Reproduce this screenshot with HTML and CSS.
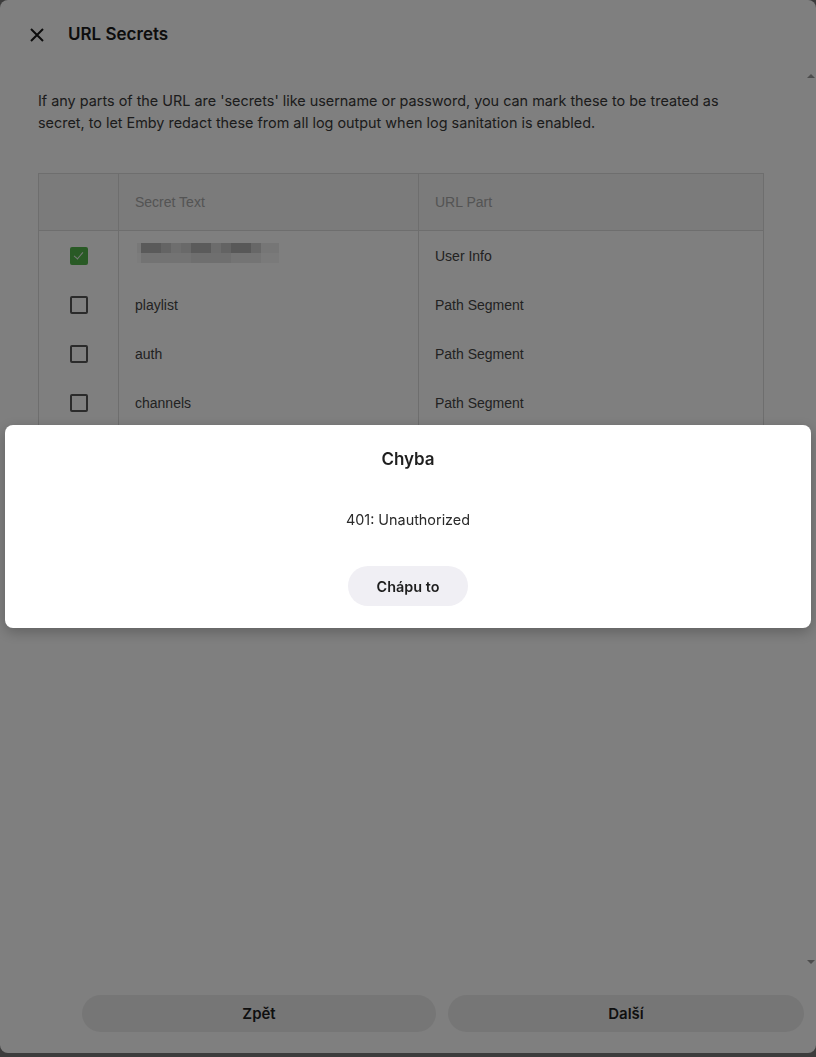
FILE: index.html
```html
<!DOCTYPE html>
<html lang="cs">
<head>
  <meta charset="UTF-8">
  <meta name="viewport" content="width=device-width, initial-scale=1.0">
  <title>URL Secrets</title>
  <link rel="stylesheet" href="styles.css">
</head>
<body>
  <div class="sheet">
    <header class="sheet-header">
      <button class="close-btn" aria-label="Close">
        <svg width="16" height="16" viewBox="0 0 16 16">
          <path d="M2 2 L14 14 M14 2 L2 14" stroke="#1a1a1a" stroke-width="2" fill="none"/>
        </svg>
      </button>
      <h1>URL Secrets</h1>
    </header>

    <main class="sheet-body">
      <p class="intro">If any parts of the URL are 'secrets' like username or password, you can mark these to be treated as secret, to let Emby redact these from all log output when log sanitation is enabled.</p>

      <table class="secrets">
        <thead>
          <tr>
            <th class="col-check"></th>
            <th class="col-text">Secret Text</th>
            <th>URL Part</th>
          </tr>
        </thead>
        <tbody>
          <tr>
            <td class="col-check"><span class="checkbox checked"></span></td>
            <td><span class="redacted"></span></td>
            <td>User Info</td>
          </tr>
          <tr>
            <td class="col-check"><span class="checkbox"></span></td>
            <td>playlist</td>
            <td>Path Segment</td>
          </tr>
          <tr>
            <td class="col-check"><span class="checkbox"></span></td>
            <td>auth</td>
            <td>Path Segment</td>
          </tr>
          <tr>
            <td class="col-check"><span class="checkbox"></span></td>
            <td>channels</td>
            <td>Path Segment</td>
          </tr>
        </tbody>
      </table>
    </main>

    <footer class="sheet-footer">
      <button class="footer-btn">Zpět</button>
      <button class="footer-btn">Další</button>
    </footer>

    <span class="scroll-arrow up"></span>
    <span class="scroll-arrow down"></span>
  </div>

  <div class="overlay">
    <div class="dialog">
      <h2>Chyba</h2>
      <p>401: Unauthorized</p>
      <button class="dialog-btn">Chápu to</button>
    </div>
  </div>
</body>
</html>
```

FILE: styles.css
```css
* {
  box-sizing: border-box;
  margin: 0;
  padding: 0;
}

html {
  background: #787878;
}

body {
  height: 1057px;
  overflow: hidden;
  font-family: Inter, "Noto Sans", sans-serif;
  color: #1f1f1f;
}

button {
  font-family: inherit;
  border: none;
  cursor: pointer;
}

/* sheet */

.sheet {
  position: relative;
  height: 1053px;
  background: #fefefe;
  border-radius: 8px;
  display: flex;
  flex-direction: column;
}

.sheet-header {
  height: 68px;
  display: flex;
  align-items: center;
  padding-left: 29px;
}

.close-btn {
  width: 16px;
  height: 16px;
  background: none;
  display: flex;
  margin-right: 23px;
  margin-top: 2px;
}

.sheet-header h1 {
  font-size: 17px;
  font-weight: 600;
  color: #1a1a1a;
}

.sheet-body {
  flex: 1;
  padding: 22px 52px 0 38px;
}

.intro {
  font-size: 14.4px;
  line-height: 22px;
  color: #383838;
  margin-bottom: 39px;
  padding-right: 4px;
}

/* table */

.secrets {
  width: 726px;
  border-collapse: collapse;
  font-family: "Liberation Sans", Arial, sans-serif;
  font-size: 14px;
  color: #454545;
}

.secrets th,
.secrets td {
  border: 1px solid #dcdcdc;
  text-align: left;
  padding: 0 16px;
}

.secrets tbody td {
  border-top: none;
  border-bottom: none;
  height: 49px;
  padding-top: 2px;
}

.secrets th {
  height: 57px;
  background: #f6f6f6;
  font-weight: normal;
  color: #a8a8a8;
}

.secrets .col-check {
  width: 80px;
  text-align: center;
  padding: 0;
}

.secrets .col-text {
  width: 300px;
}

.checkbox {
  display: inline-block;
  width: 18px;
  height: 18px;
  border: 2px solid #565656;
  border-radius: 2px;
  vertical-align: middle;
  position: relative;
  top: 1px;
}

.checkbox.checked {
  background: #52b54b;
  border-color: #52b54b;
}

.checkbox.checked::after {
  content: '';
  position: absolute;
  left: 4px;
  top: 1px;
  width: 4px;
  height: 8px;
  border: solid #f0f0f0;
  border-width: 0 1.5px 1.5px 0;
  transform: rotate(40deg);
}

.redacted {
  display: block;
  width: 142px;
  height: 20px;
  margin: -6px 0 0 2px;
  background:
    linear-gradient(90deg,
      #f0f0f0 0 4px, #b4b4b4 4px 24px, #c8c8c8 24px 34px, #dcdcdc 34px 44px,
      #d2d2d2 44px 54px, #b6b6b6 54px 74px, #d8d8d8 74px 84px, #c6c6c6 84px 94px,
      #b0b0b0 94px 114px, #cfcfcf 114px 124px, #ececec 124px 142px) top / 100% 10px no-repeat,
    linear-gradient(90deg,
      #f8f8f8 0 4px, #e6e6e6 4px 54px, #dedede 54px 94px, #e8e8e8 94px 124px, #f4f4f4 124px 142px) bottom / 100% 10px no-repeat;
}

/* footer */

.sheet-footer {
  display: flex;
  gap: 12px;
  padding: 0 12px 21px 82px;
}

.footer-btn {
  flex: 1;
  height: 37px;
  border-radius: 19px;
  background: #ededed;
  font-size: 15px;
  font-weight: 600;
  color: #1f1f1f;
}

.footer-btn:last-child {
  flex-basis: 2px;
}

/* scrollbar arrows */

.scroll-arrow {
  position: absolute;
  right: 1px;
  width: 0;
  height: 0;
  border-left: 4px solid transparent;
  border-right: 4px solid transparent;
}

.scroll-arrow.up {
  top: 74px;
  border-bottom: 4px solid #9a9a9a;
}

.scroll-arrow.down {
  top: 960px;
  border-top: 4px solid #9a9a9a;
}

/* error dialog */

.overlay {
  position: fixed;
  inset: 0;
  background: rgba(0, 0, 0, 0.5);
  display: flex;
  align-items: center;
  padding: 0 5px 4px;
}

.dialog {
  width: 100%;
  background: #fff;
  border-radius: 8px;
  box-shadow: 0 4px 14px rgba(0, 0, 0, 0.25);
  text-align: center;
  padding: 22px 0 22px;
}

.dialog h2 {
  font-size: 17px;
  font-weight: 600;
  line-height: 24px;
  color: #1f1f1f;
  margin-bottom: 39px;
}

.dialog p {
  font-size: 14.4px;
  line-height: 20px;
  color: #2a2a2a;
  margin-bottom: 36px;
}

.dialog-btn {
  width: 120px;
  height: 40px;
  border-radius: 20px;
  background: #f0eff4;
  font-size: 14.4px;
  font-weight: 600;
  color: #1f1f1f;
}
```
